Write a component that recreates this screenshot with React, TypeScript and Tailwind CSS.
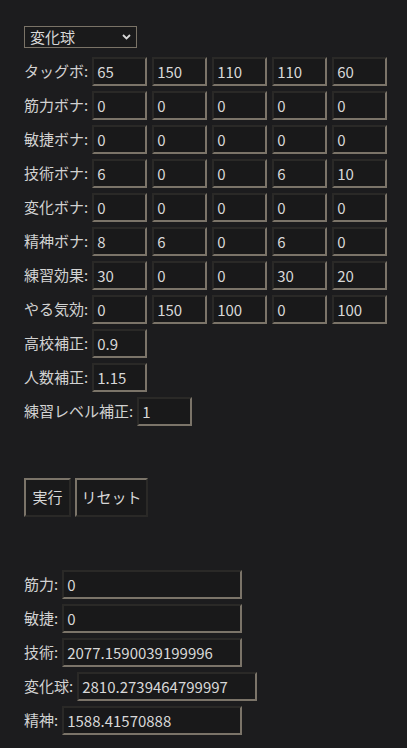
import type { FC } from 'react';

const font = { fontFamily: '"Noto Sans CJK JP", "Noto Sans", sans-serif' };

type Row = { label: string; values: string[] };

const rows: Row[] = [
    { label: 'タッグボ', values: ['65', '150', '110', '110', '60'] },
    { label: '筋力ボナ', values: ['0', '0', '0', '0', '0'] },
    { label: '敏捷ボナ', values: ['0', '0', '0', '0', '0'] },
    { label: '技術ボナ', values: ['6', '0', '0', '6', '10'] },
    { label: '変化ボナ', values: ['0', '0', '0', '0', '0'] },
    { label: '精神ボナ', values: ['8', '6', '0', '6', '0'] },
    { label: '練習効果', values: ['30', '0', '0', '30', '20'] },
    { label: 'やる気効', values: ['0', '150', '100', '0', '100'] },
    { label: '高校補正', values: ['0.9'] },
    { label: '人数補正', values: ['1.15'] },
    { label: '練習レベル補正', values: ['1'] },
];

const results = [
    { label: '筋力', value: '0' },
    { label: '敏捷', value: '0' },
    { label: '技術', value: '2077.1590039199996' },
    { label: '変化球', value: '2810.2739464799997' },
    { label: '精神', value: '1588.41570888' },
];

const Field: FC<{ value: string; wide?: boolean }> = ({ value, wide }) => (
    <input
        readOnly
        defaultValue={value}
        className={
            wide
                ? 'h-[29px] w-[180px] border-2 border-t-[#2a2927] border-l-[#2a2927] border-b-[#7b7469] border-r-[#7b7469] bg-[#19191a] px-[3px] text-[15px] text-[#d8d8d8] outline-none'
                : 'h-[29px] w-[55px] border-2 border-t-[#2a2927] border-l-[#2a2927] border-b-[#7b7469] border-r-[#7b7469] bg-[#19191a] px-[3px] text-[15px] text-[#d8d8d8] outline-none'
        }
        style={font}
    />
);

export default function App() {
    return (
        <div className="min-h-[748px] w-full bg-[#1c1c1e] pl-[24px] pt-[26px] text-[15px] text-[#d2d2d2]" style={font}>
            {/* 球種セレクト */}
            <div className="relative h-[22px] w-[113px]">
                <select
                    defaultValue="henka"
                    className="h-[22px] w-[113px] appearance-none border border-[#7a7367] bg-[#1a1a1b] pl-[5px] text-[15px] leading-[20px] text-[#d8d8d8] outline-none"
                    style={font}
                >
                    <option value="henka">変化球</option>
                </select>
                <svg className="pointer-events-none absolute right-[6px] top-[8px] h-[6px] w-[9px]" viewBox="0 0 9 6">
                    <path d="M1 1l3.5 3.5L8 1" fill="none" stroke="#d8d8d8" strokeWidth="1.8" />
                </svg>
            </div>

            {/* 入力欄 */}
            <div className="mt-[9px] flex flex-col gap-[5px]">
                {rows.map((r) => (
                    <div key={r.label} className="flex h-[29px] items-center">
                        <span className="mr-[4px] whitespace-nowrap">{r.label}:</span>
                        <div className="flex gap-[5px]">
                            {r.values.map((v, i) => (
                                <Field key={i} value={v} />
                            ))}
                        </div>
                    </div>
                ))}
            </div>

            {/* ボタン */}
            <div className="mt-[52px] flex gap-[4px]">
                <button className="h-[39px] w-[47px] border-2 border-t-[#7b7469] border-l-[#7b7469] border-b-[#2a2927] border-r-[#2a2927] bg-[#19191a] text-[15px] text-[#d8d8d8]">
                    実行
                </button>
                <button className="h-[39px] w-[73px] border-2 border-t-[#7b7469] border-l-[#7b7469] border-b-[#2a2927] border-r-[#2a2927] bg-[#19191a] text-[15px] text-[#d8d8d8]">
                    リセット
                </button>
            </div>

            {/* 結果 */}
            <div className="mt-[53px] flex flex-col gap-[5px] pb-[13px]">
                {results.map((r) => (
                    <div key={r.label} className="flex h-[29px] items-center">
                        <span className="mr-[4px] whitespace-nowrap">{r.label}:</span>
                        <Field value={r.value} wide />
                    </div>
                ))}
            </div>
        </div>
    );
}
